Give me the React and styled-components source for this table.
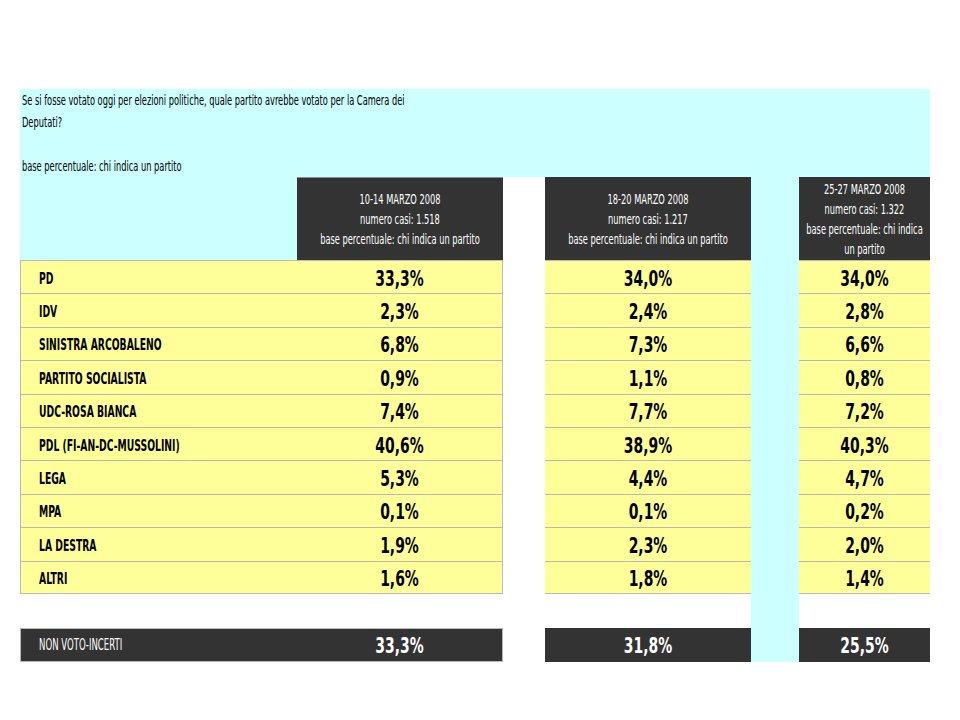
import React from 'react';
import styled, { createGlobalStyle } from 'styled-components';

const CYAN = '#ccffff';
const YELLOW = '#ffff99';
const DARK = '#333333';
const LINE = '#b9b9b9';

const Global = createGlobalStyle`
  html, body { margin: 0; padding: 0; background: #ffffff; overflow: hidden; }
  body { font-family: "DejaVu Sans", "Liberation Sans", sans-serif; color: #000; }
`;

const Page = styled.div`
  width: 960px;
  height: 720px;
  box-sizing: border-box;
  padding: 89px 0 0 20px;
`;

const Sheet = styled.div`
  display: grid;
  width: 910px;
  grid-template-columns: 277px 206px 42px 206px 48px 131px;
  grid-template-rows: 88px 83px repeat(10, 33.4px) 34px 34px;
`;

const Squeeze = styled.span`
  display: block;
  flex: none;
  width: ${(p) => 100 / p.$s}%;
  transform: scaleX(${(p) => p.$s});
  transform-origin: 0 50%;
  text-align: ${(p) => p.$align || 'left'};
  white-space: ${(p) => (p.$nowrap ? 'nowrap' : 'normal')};
`;

const Question = styled.div`
  grid-column: 1 / -1;
  grid-row: 1;
  background: ${CYAN};
  padding-left: 2px;
  font-size: 14px;
  line-height: 22px;
`;

const Corner = styled.div`
  grid-column: 1;
  grid-row: 2;
  background: ${CYAN};
`;

const Strip = styled.div`
  grid-column: 5;
  grid-row: 2 / -1;
  background: ${CYAN};
`;

const PeriodHead = styled.div`
  grid-column: ${(p) => p.$col};
  grid-row: 2;
  background: ${DARK};
  color: #ffffff;
  font-size: 14px;
  line-height: 20px;
  display: flex;
  align-items: center;
  padding: 0 4px;
  border-top: ${(p) => (p.$edge ? `1px solid #8a8a8a` : 'none')};
  box-sizing: border-box;
`;

const PartyCell = styled.div`
  grid-column: 1;
  grid-row: ${(p) => p.$row};
  background: ${YELLOW};
  border-left: 1px solid ${LINE};
  border-top: 1px solid ${LINE};
  border-bottom: ${(p) => (p.$last ? `1px solid ${LINE}` : 'none')};
  box-sizing: border-box;
  display: flex;
  align-items: center;
  padding: 2px 0 0 18px;
  font-size: 16.5px;
  font-weight: 700;
`;

const ValueCell = styled.div`
  grid-column: ${(p) => p.$col};
  grid-row: ${(p) => p.$row};
  background: ${YELLOW};
  border-top: 1px solid ${LINE};
  border-bottom: ${(p) => (p.$last ? `1px solid ${LINE}` : 'none')};
  border-right: ${(p) => (p.$edge ? `1px solid ${LINE}` : 'none')};
  box-sizing: border-box;
  display: flex;
  align-items: center;
  padding-top: 3px;
  font-size: 20.5px;
  font-weight: 700;
`;

const TotalLabel = styled.div`
  grid-column: 1;
  grid-row: 14;
  background: ${DARK};
  color: #ffffff;
  border-top: 1px solid ${LINE};
  border-bottom: 1px solid ${LINE};
  border-left: 1px solid ${LINE};
  box-sizing: border-box;
  display: flex;
  align-items: center;
  padding-left: 18px;
  font-size: 15px;
`;

const TotalValue = styled.div`
  grid-column: ${(p) => p.$col};
  grid-row: 14;
  background: ${DARK};
  color: #ffffff;
  border-top: ${(p) => (p.$edge ? `1px solid ${LINE}` : 'none')};
  border-bottom: ${(p) => (p.$edge ? `1px solid ${LINE}` : 'none')};
  border-right: ${(p) => (p.$edge ? `1px solid ${LINE}` : 'none')};
  box-sizing: border-box;
  display: flex;
  align-items: center;
  padding-top: 2px;
  font-size: 20.5px;
  font-weight: 700;
`;

const periods = [
  { col: 2, date: '10-14 MARZO 2008', casi: '1.518', edge: true },
  { col: 4, date: '18-20 MARZO 2008', casi: '1.217' },
  { col: 6, date: '25-27 MARZO 2008', casi: '1.322' },
];

const rows = [
  ['PD', '33,3%', '34,0%', '34,0%'],
  ['IDV', '2,3%', '2,4%', '2,8%'],
  ['SINISTRA ARCOBALENO', '6,8%', '7,3%', '6,6%'],
  ['PARTITO SOCIALISTA', '0,9%', '1,1%', '0,8%'],
  ['UDC-ROSA BIANCA', '7,4%', '7,7%', '7,2%'],
  ['PDL (FI-AN-DC-MUSSOLINI)', '40,6%', '38,9%', '40,3%'],
  ['LEGA', '5,3%', '4,4%', '4,7%'],
  ['MPA', '0,1%', '0,1%', '0,2%'],
  ['LA DESTRA', '1,9%', '2,3%', '2,0%'],
  ['ALTRI', '1,6%', '1,8%', '1,4%'],
];

const totals = ['33,3%', '31,8%', '25,5%'];
const valueCols = [2, 4, 6];

export default function App() {
  return (
    <>
      <Global />
      <Page>
        <Sheet>
          <Question>
            <Squeeze $s={0.59} $nowrap>
              Se si fosse votato oggi per elezioni politiche, quale partito avrebbe votato per la Camera dei
              <br />
              Deputati?
              <br />
              <br />
              base percentuale: chi indica un partito
            </Squeeze>
          </Question>
          <Corner />
          <Strip />
          {periods.map((p) => (
            <PeriodHead key={p.col} $col={p.col} $edge={p.edge}>
              <Squeeze $s={0.59} $align="center">
                {p.date}
                <br />
                numero casi: {p.casi}
                <br />
                base percentuale: chi indica un partito
              </Squeeze>
            </PeriodHead>
          ))}
          {rows.map((r, i) => {
            const row = i + 3;
            const last = i === rows.length - 1;
            return (
              <React.Fragment key={r[0]}>
                <PartyCell $row={row} $last={last}>
                  <Squeeze $s={0.56} $nowrap>{r[0]}</Squeeze>
                </PartyCell>
                {valueCols.map((c, k) => (
                  <ValueCell key={c} $col={c} $row={row} $last={last} $edge={c === 2}>
                    <Squeeze $s={0.68} $align="center" $nowrap>{r[k + 1]}</Squeeze>
                  </ValueCell>
                ))}
              </React.Fragment>
            );
          })}
          <TotalLabel>
            <Squeeze $s={0.57} $nowrap>NON VOTO-INCERTI</Squeeze>
          </TotalLabel>
          {valueCols.map((c, k) => (
            <TotalValue key={c} $col={c} $edge={c === 2}>
              <Squeeze $s={0.68} $align="center" $nowrap>{totals[k]}</Squeeze>
            </TotalValue>
          ))}
        </Sheet>
      </Page>
    </>
  );
}
